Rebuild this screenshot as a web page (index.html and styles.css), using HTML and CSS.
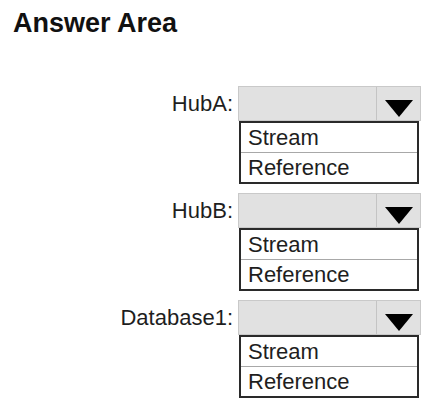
FILE: index.html
```html
<html>
  <head>
    <link rel="stylesheet" href="styles.css">
  </head>
  <body>
    <h1 class="title">Answer Area</h1>
    <div class="fields">
      <div class="field">
        <label class="field-label">HubA:</label>
        <div class="dropdown">
          <div class="select">
            <span class="select-value"></span>
            <span class="select-btn">
              <svg width="28" height="17" viewBox="0 0 28 17"><polygon points="0,0 28,0 14,17" fill="#000"/></svg>
            </span>
          </div>
          <ul class="options">
            <li>Stream</li>
            <li>Reference</li>
          </ul>
        </div>
      </div>
      <div class="field">
        <label class="field-label">HubB:</label>
        <div class="dropdown">
          <div class="select">
            <span class="select-value"></span>
            <span class="select-btn">
              <svg width="28" height="17" viewBox="0 0 28 17"><polygon points="0,0 28,0 14,17" fill="#000"/></svg>
            </span>
          </div>
          <ul class="options">
            <li>Stream</li>
            <li>Reference</li>
          </ul>
        </div>
      </div>
      <div class="field">
        <label class="field-label">Database1:</label>
        <div class="dropdown">
          <div class="select">
            <span class="select-value"></span>
            <span class="select-btn">
              <svg width="28" height="17" viewBox="0 0 28 17"><polygon points="0,0 28,0 14,17" fill="#000"/></svg>
            </span>
          </div>
          <ul class="options">
            <li>Stream</li>
            <li>Reference</li>
          </ul>
        </div>
      </div>
    </div>
  </body>
</html>
```

FILE: styles.css
```css
* {
  box-sizing: border-box;
  font-family: "Liberation Sans", Arial, sans-serif;
}

body {
  margin: 0;
  background: #fff;
  color: #1e1e1e;
}

.title {
  margin: 7px 0 0 13px;
  font-size: 27px;
  line-height: 32px;
  font-weight: bold;
  color: #111;
}

.fields {
  display: flex;
  flex-direction: column;
  gap: 9px;
  padding-top: 47px;
}

.field {
  display: flex;
  align-items: flex-start;
}

.field-label {
  width: 233px;
  text-align: right;
  font-size: 22px;
  line-height: 35px;
}

.dropdown {
  width: 183px;
  margin-left: 5px;
}

.select {
  display: flex;
  height: 35px;
  background: #e1e1e1;
  border: 1px solid #c9c9c9;
}

.select-value {
  flex: 1;
}

.select-btn {
  width: 44px;
  border-left: 1px solid #c4c4c4;
  display: flex;
  justify-content: center;
  align-items: flex-end;
  padding-bottom: 3px;
}

.options {
  list-style: none;
  margin: 0 2px 0 1px;
  padding: 0;
  border: 2px solid #2a2a2a;
  background: #fff;
}

.options li {
  font-size: 22px;
  line-height: 29px;
  padding-left: 7px;
}

.options li:first-child {
  border-bottom: 1px solid #a8a8a8;
}
```
